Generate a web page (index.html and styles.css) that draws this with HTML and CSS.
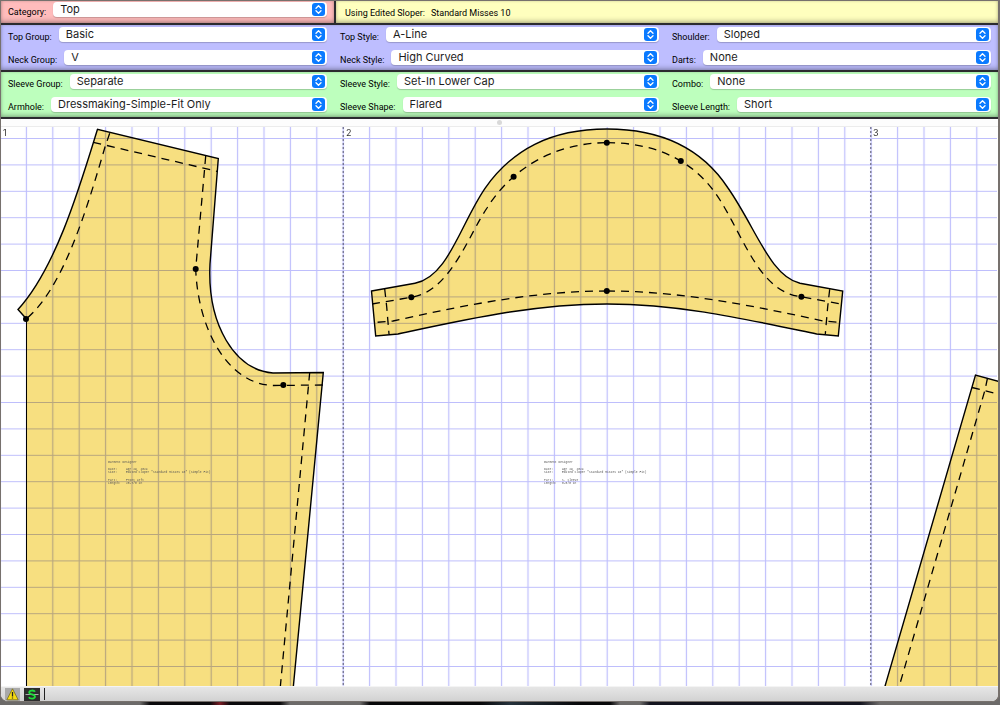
FILE: index.html
```html
<!DOCTYPE html>
<html lang="en">
<head>
<meta charset="utf-8">
<title>Garment Designer</title>
<link rel="stylesheet" href="styles.css">
</head>
<body>
<svg class="defs" width="0" height="0" aria-hidden="true">
  <symbol id="chevrons" viewBox="0 0 13 13">
    <rect width="13" height="13" rx="3" fill="#0a7aff"/>
    <path d="M4 5.2 6.5 2.8 9 5.2M4 7.8 6.5 10.2 9 7.8" fill="none" stroke="#fff" stroke-width="1.3" stroke-linecap="round" stroke-linejoin="round"/>
  </symbol>
</svg>
<div class="window">
  <div class="top-row">
    <div class="panel category">
      <div class="field"><label for="category">Category:</label><span class="picker"><select id="category"><option>Top</option></select><svg class="chev"><use href="#chevrons"/></svg></span></div>
    </div>
    <div class="panel sloper"><span>Using Edited Sloper:</span><span>Standard Misses 10</span></div>
  </div>
  <div class="panel fields body-panel">
    <div class="field"><label for="top-group">Top Group:</label><span class="picker"><select id="top-group"><option>Basic</option></select><svg class="chev"><use href="#chevrons"/></svg></span></div>
    <div class="field"><label for="top-style">Top Style:</label><span class="picker"><select id="top-style"><option>A-Line</option></select><svg class="chev"><use href="#chevrons"/></svg></span></div>
    <div class="field"><label for="shoulder">Shoulder:</label><span class="picker"><select id="shoulder"><option>Sloped</option></select><svg class="chev"><use href="#chevrons"/></svg></span></div>
    <div class="field"><label for="neck-group">Neck Group:</label><span class="picker"><select id="neck-group"><option>V</option></select><svg class="chev"><use href="#chevrons"/></svg></span></div>
    <div class="field"><label for="neck-style">Neck Style:</label><span class="picker"><select id="neck-style"><option>High Curved</option></select><svg class="chev"><use href="#chevrons"/></svg></span></div>
    <div class="field"><label for="darts">Darts:</label><span class="picker"><select id="darts"><option>None</option></select><svg class="chev"><use href="#chevrons"/></svg></span></div>
  </div>
  <div class="panel fields sleeve-panel">
    <div class="field"><label for="sleeve-group">Sleeve Group:</label><span class="picker"><select id="sleeve-group"><option>Separate</option></select><svg class="chev"><use href="#chevrons"/></svg></span></div>
    <div class="field"><label for="sleeve-style">Sleeve Style:</label><span class="picker"><select id="sleeve-style"><option>Set-In Lower Cap</option></select><svg class="chev"><use href="#chevrons"/></svg></span></div>
    <div class="field"><label for="combo">Combo:</label><span class="picker"><select id="combo"><option>None</option></select><svg class="chev"><use href="#chevrons"/></svg></span></div>
    <div class="field"><label for="armhole">Armhole:</label><span class="picker"><select id="armhole"><option>Dressmaking-Simple-Fit Only</option></select><svg class="chev"><use href="#chevrons"/></svg></span></div>
    <div class="field"><label for="sleeve-shape">Sleeve Shape:</label><span class="picker"><select id="sleeve-shape"><option>Flared</option></select><svg class="chev"><use href="#chevrons"/></svg></span></div>
    <div class="field"><label for="sleeve-length">Sleeve Length:</label><span class="picker"><select id="sleeve-length"><option>Short</option></select><svg class="chev"><use href="#chevrons"/></svg></span></div>
  </div>
  <div class="splitter"><span class="grip"></span></div>
  <main class="canvas">
    <svg class="drawing" role="img" aria-label="Pattern pieces">
      <defs>
        <pattern id="grid" width="26.4" height="26.4" patternUnits="userSpaceOnUse" patternTransform="translate(13.2 125.3)">
          <path d="M13.2 0V26.4M0 13.2H26.4" fill="none" stroke="#bebefc" stroke-width="1.2"/>
        </pattern>
      </defs>
      <g transform="translate(-1 -127)">
        <g class="fabric">
          <path d="M97.5 129.3 218.3 158.5 210 264C207 325 235 370 273 373L323.3 372.5 293.3 687H26.5V319L18 309.5C56 268 80 186 97.5 129.3Z"/>
          <path d="M371.5 291 415 283.3C448 277 460 225 485 188.3 512 150 550 129 607 129 667 129 705 153 728 188 756 228 770 276 800 283.3L842.7 291 838.3 336 816.7 334C745 319 680 304 607 304 534 304 468 319 398 334L375.7 336Z"/>
          <path d="M975.5 375 1010 384.5V700H881Z"/>
        </g>
        <rect class="grid" y="127" width="100%" height="100%" fill="url(#grid)"/>
        <g class="page-edge"><path d="M343.2 127V2000M870.8 127V2000"/></g>
        <g class="cut">
          <path d="M26.5 319 18 309.5C56 268 80 186 97.5 129.3L218.3 158.5 210 264C207 325 235 370 273 373L323.3 372.5 293.3 687"/>
          <path class="fold" d="M26.5 319V687"/>
          <path d="M371.5 291 415 283.3C448 277 460 225 485 188.3 512 150 550 129 607 129 667 129 705 153 728 188 756 228 770 276 800 283.3L842.7 291 838.3 336 816.7 334C745 319 680 304 607 304 534 304 468 319 398 334L375.7 336Z"/>
          <path d="M1010 384.5 975.5 375 881 700"/>
        </g>
        <g class="stitch">
          <path d="M93.3 142.3 217 171.3"/>
          <path d="M109.7 133.3 105 147C88 205 64 288 26 319"/>
          <path d="M205.7 156 204.5 170 195.7 269C198 330 228 384 273 385.5L323 385"/>
          <path d="M309.7 372.5 280.3 687"/>
          <path d="M372 304 411 297.3C450 292 468 236 487 208 512 168 555 142.7 607 142.7"/>
          <path d="M607 142.7C655 142.7 695 160 720 200 745 240 760 292 801 296.7L840.7 304"/>
          <path d="M607 291C535 291 465 305 393 321L376.7 322.3"/>
          <path d="M607 291C679 291 750 305 823 321L839 322.3"/>
          <path d="M384.7 289 386.7 306.7 389 334"/>
          <path d="M829.7 289.3 827.7 306.7 825.3 334"/>
          <path d="M987.5 378 985 390 899 687"/>
          <path d="M972 387.5 1010 397"/>
        </g>
        <g class="notches">
          <circle cx="26" cy="319" r="3"/><circle cx="195.7" cy="269" r="3"/><circle cx="283.3" cy="385" r="3"/>
          <circle cx="411.3" cy="297.3" r="3"/><circle cx="513.6" cy="176.8" r="3"/><circle cx="606.8" cy="142.7" r="3"/>
          <circle cx="680.8" cy="161" r="3"/><circle cx="801.4" cy="296.7" r="3"/><circle cx="606.8" cy="291" r="3"/>
        </g>
        <g class="page-number"><text x="3" y="136">1</text><text x="346" y="136">2</text><text x="873" y="136">3</text></g>
        <g class="note">
          <text x="108" y="463">Garment Designer</text>
          <text x="108" y="470">Date:</text><text x="126" y="470">Apr 29, 2024</text>
          <text x="108" y="473">Size:</text><text x="126" y="473">Edited Sloper "Standard Misses 10" (Simple Fit)</text>
          <text x="108" y="481">Part:</text><text x="126" y="481">Front Left</text>
          <text x="108" y="484">Length:</text><text x="126" y="484">25-7/8 in</text>
        </g>
        <g class="note">
          <text x="544" y="463">Garment Designer</text>
          <text x="544" y="470">Date:</text><text x="562" y="470">Apr 29, 2024</text>
          <text x="544" y="473">Size:</text><text x="562" y="473">Edited Sloper "Standard Misses 10" (Simple Fit)</text>
          <text x="544" y="481">Part:</text><text x="562" y="481">S. Sleeve</text>
          <text x="544" y="484">Length:</text><text x="562" y="484">8-5/8 in</text>
        </g>
      </g>
    </svg>
  </main>
  <footer class="status">
    <button class="tool warn" aria-label="Warnings"><svg width="15" height="13" viewBox="0 0 15 13"><path d="M7.5 .8 13.2 11.8H1.8Z" fill="#f7dc10" stroke="#6b6212" stroke-width=".7" stroke-linejoin="round"/><path d="M7.5 4V8.4M7.5 9.4V10.6" stroke="#222" stroke-width="1.3"/></svg></button>
    <button class="tool snap" aria-label="Symmetry"><svg width="16" height="13" viewBox="0 0 16 13"><path d="M1.5 6.5H14.5" stroke="#aaa" stroke-width="1"/><path d="M11 3.8C10 2 5.2 2 5.2 4.4 5.2 6.8 11 5.9 11 8.6 11 11.2 5.8 11 4.8 9.2" fill="none" stroke="#1fdc3a" stroke-width="1.8"/></svg></button>
    <span class="divider"></span>
  </footer>
</div>
<div class="desktop"></div>
</body>
</html>
```

FILE: styles.css
```css
* { box-sizing: border-box; }

body {
  margin: 0;
  height: 100vh;
  display: flex;
  flex-direction: column;
  background: #6c6a69;
  font-family: Inter, "Liberation Sans", sans-serif;
  color: #111;
}

.defs { position: absolute; }

.window {
  flex: 1;
  min-height: 0;
  display: flex;
  flex-direction: column;
  overflow: hidden;
  border: solid #77716d;
  border-width: 1px 2px 1px 1px;
  border-radius: 0 0 8px 8px;
  background: #fff;
}

.top-row {
  display: grid;
  grid-template-columns: 335fr 662fr;
}

.panel {
  border-bottom: 2px solid #2b2b2f;
  box-shadow: inset 0 -3px 5px -1px rgba(0, 0, 0, 0.25), inset 0 0 3px rgba(0, 0, 0, 0.18);
}

.category {
  padding: 1px 7px 6px;
  background: #ffbcbc;
  border-right: 2px solid #2b2b2f;
}

.sloper {
  display: flex;
  align-items: center;
  gap: 6px;
  padding: 2px 9px 0;
  background: #ffffbe;
}

.fields {
  display: grid;
  grid-template-columns: repeat(3, 1fr);
  gap: 8px 13px;
  padding: 2px 7px 5px;
}

.body-panel { background: #bebeff; }
.sleeve-panel { background: #bdffbd; }

.field {
  display: flex;
  align-items: flex-end;
  gap: 7px;
  height: 15px;
}

label,
.sloper {
  font-family: Roboto, "Liberation Sans", sans-serif;
  font-size: 9px;
  font-weight: 400;
  line-height: 10px;
  white-space: nowrap;
  color: #000;
}

.picker {
  flex: 1;
  min-width: 0;
  display: grid;
  align-items: center;
}

.picker > * { grid-area: 1 / 1; }

select {
  appearance: none;
  width: 100%;
  height: 15px;
  margin: 0;
  padding: 0 20px 1px 7px;
  border: 0;
  border-radius: 4px;
  background: #fff;
  box-shadow: 0 1px 1px rgba(0, 0, 0, 0.2);
  color: #1c1c1c;
  font: 11px/14px Inter, "Liberation Sans", sans-serif;
}

.chev {
  width: 13px;
  height: 13px;
  margin-right: 2px;
  justify-self: end;
  pointer-events: none;
}

.splitter {
  height: 8px;
  display: flex;
  align-items: center;
  justify-content: center;
  border-bottom: 1px solid #ececec;
  background: #fdfdfd;
}

.grip {
  width: 5px;
  height: 5px;
  border-radius: 50%;
  background: #d9d9d9;
}

.canvas {
  flex: 1;
  min-height: 0;
  display: flex;
}

.drawing {
  flex: 1;
  min-width: 0;
  height: 100%;
  isolation: isolate;
  background: #fff;
}

.fabric { fill: #f7df80; }
.grid { mix-blend-mode: multiply; }
.page-edge { fill: none; stroke: #54546c; stroke-width: 1px; stroke-dasharray: 2 2; }
.cut { fill: none; stroke: #000; stroke-width: 1.4px; stroke-linejoin: miter; }
.fold { stroke-width: 1px; }
.stitch { fill: none; stroke: #000; stroke-width: 1.3px; stroke-dasharray: 8 6; }
.page-number { font: 9px Inter, sans-serif; fill: #333; }
.note { font: 3px "Liberation Mono", monospace; fill: #555; }

.status {
  height: 15px;
  display: flex;
  align-items: center;
  gap: 4px;
  padding-left: 4px;
  border-top: 1px solid #f4f4f4;
  background: linear-gradient(#e6e6e6, #d2d2d2);
}

.tool {
  display: flex;
  margin: 0;
  padding: 0;
  border: 0;
}

.warn { background: #a9a9a9; }
.snap { background: #2e2e2e; }
.divider { width: 1px; height: 12px; background: #222; }

.desktop {
  height: 3px;
  background: linear-gradient(90deg, #6c6a69 0 14%, #0b0a0c 15% 21%, #7a1d24 22%, #0b0a0c 23% 28%, #6c6a69 29% 36%, #08080a 37% 48%, #26323c 51%, #08080a 58% 61%, #6c6a69 62% 64%, #15151f 65% 86%, #6c6a69 88%);
}
```
